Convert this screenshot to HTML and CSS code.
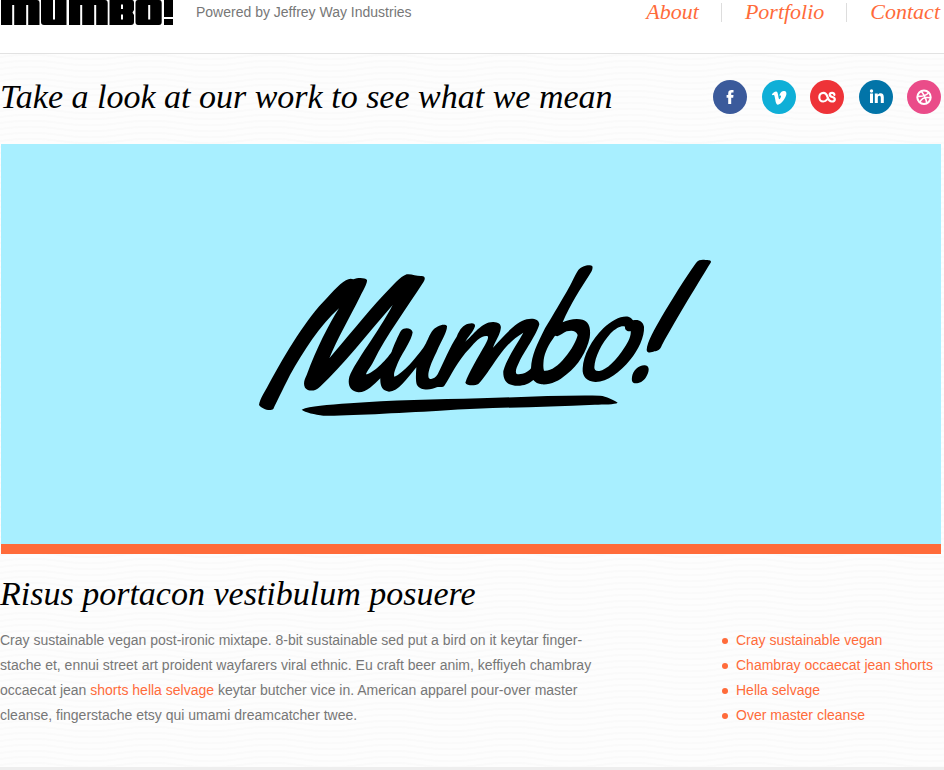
FILE: index.html
```html
<!DOCTYPE html>
<html lang="en">
<head>
<meta charset="utf-8">
<meta name="viewport" content="width=device-width, initial-scale=1">
<title>Mumbo!</title>
<link rel="stylesheet" href="styles.css">
</head>
<body>
<header class="masthead">
  <a class="brand" href="#" aria-label="Mumbo!">
    <svg class="wordmark" viewBox="0 0 174 26" aria-hidden="true">
      <path d="M1 0H37Q39.500 0 39.500 3V25H1ZM41 0H66.500V25H44Q41 25 41 22ZM69 0H105Q107.700 0 107.700 3V25H69ZM109.500 0H132Q134 0 134 3V10L132.500 12.500L134 15V22Q134 25 131 25H109.500ZM138 0H159Q161.700 0 161.700 3V22Q161.700 25 159 25H138Q135.500 25 135.500 22V3Q135.500 0 138 0ZM164 0H173V17H164ZM164 19H173V25H164Z"/>
      <path class="cut" d="M13.200 5V26M27.200 5V26M54 0V19.500M81.200 5V26M95.200 5V26M122 4.500V9M122 14.500V19.500M149.200 5V19.500"/>
    </svg>
  </a>
  <p class="tagline">Powered by Jeffrey Way Industries</p>
  <nav class="nav" aria-label="Main">
    <a href="#">About</a>
    <a href="#">Portfolio</a>
    <a href="#">Contact</a>
  </nav>
</header>
<main class="page">
  <div class="intro">
    <h1>Take a look at our work to see what we mean</h1>
    <div class="social">
      <a href="#" aria-label="Facebook"><svg viewBox="0 0 34 34"><circle cx="17" cy="17" r="17" fill="#3b5a9b"/><path fill="#fff" d="M15.2 24V17.8H13.6V15H15.2V13.4C15.2 11 16.5 10 18.5 10H20.5V12.6H19.2C18.4 12.6 18.2 13 18.2 13.7V15H20.5L20.2 17.8H18.2V24Z"/></svg></a>
      <a href="#" aria-label="Vimeo"><svg viewBox="0 0 34 34"><circle cx="17" cy="17" r="17" fill="#0fafd7"/><path fill="#fff" d="M9.8 14.2C11.3 12.9 12.7 11.5 14 11.5C15.4 11.6 15.8 13.2 16.1 15.1C16.5 17.5 16.8 19.2 17.3 19.2C17.8 19.2 18.9 17.3 19 16.4C19.1 15.3 18.2 15.2 17.3 15.6C18.3 12.3 20.2 10.9 22.2 11.1C24 11.2 24.6 12.5 24.4 14.3C24 17.5 19.1 24.7 15.9 24.7C13.5 24.7 13.5 19.5 12.5 16C12.2 14.7 11.8 14.7 10.5 15.3Z"/></svg></a>
      <a href="#" aria-label="Last.fm"><svg viewBox="0 0 34 34"><circle cx="17" cy="17" r="17" fill="#ee3338"/><path fill="none" stroke="#fff" stroke-width="2.2" stroke-linecap="round" d="M17 19.5C16 21 14.8 21.5 13.2 21.5C10.8 21.5 9.3 19.5 9.3 17.2C9.3 14.7 11 12.9 13.4 12.9C16.2 12.9 16.8 14.8 17.6 17.2C18.5 20.1 19.5 21.5 21.8 21.5C23.7 21.5 24.8 20.6 24.8 19.2C24.8 16.4 19.7 17.7 19.7 14.8C19.7 13.6 20.7 12.9 22.1 12.9C23.4 12.9 24.2 13.5 24.4 14.8"/></svg></a>
      <a href="#" aria-label="LinkedIn"><svg viewBox="0 0 34 34"><circle cx="17" cy="17" r="17" fill="#0274a8"/><path fill="#fff" d="M11 13.5H14V23H11ZM15.8 13.5H18.7V14.8C19.4 13.7 20.3 13.2 21.6 13.2C23.8 13.2 24.8 14.6 24.8 17V23H21.8V17.8C21.8 16.5 21.4 15.8 20.4 15.8C19.3 15.8 18.8 16.6 18.8 17.8V23H15.8Z"/><circle cx="12.5" cy="11" r="1.7" fill="#fff"/></svg></a>
      <a href="#" aria-label="Dribbble"><svg viewBox="0 0 34 34"><circle cx="17" cy="17" r="17" fill="#ea4c89"/><g fill="none" stroke="#fff" stroke-width="1.6"><circle cx="17" cy="17.3" r="6.7" stroke-width="2"/><path d="M14.2 11.3C17 14.5 19 18.5 19.8 23.2M10.5 16.3C14.5 16.6 19.5 15.5 21.6 12.6M12.8 22.2C14.4 18.5 18.5 16.8 23.5 17.8"/></g></svg></a>
    </div>
  </div>
  <div class="hero">
    <svg class="hero-logo" viewBox="51 42 1365 474" role="img" aria-label="Mumbo!">
      <g fill-rule="evenodd">
        <path d="M57 480C60 460 75 440 85 420C140 320 200 220 260 160C290 125 315 102 332 101L340 103C355 97 375 98 381 105C382 115 370 135 360 155C330 215 290 285 268 340C315 285 380 205 430 151C460 120 480 95 500 88C515 86 530 94 545 93C557 94 556 102 550 112C500 190 440 270 400 350C390 370 380 378 378 388C395 388 440 345 455 320C462 300 475 270 483 257C495 245 515 250 518 262C515 285 490 320 475 350C465 375 460 385 463 395C490 385 530 335 550 308C562 290 565 275 575 260C590 240 615 235 621 243C622 260 605 285 590 320C570 360 562 385 566 398C570 405 585 402 593 388C612 350 630 305 650 275C660 250 670 240 685 236C700 232 706 236 705 244C700 260 685 275 676 290C700 270 725 230 760 231C778 232 785 240 782 252C780 270 765 290 759 308C790 275 825 232 860 223C878 219 897 222 898 238C892 265 850 325 838 350C828 370 825 380 830 387C845 390 865 382 873 370C875 330 890 300 915 250C930 225 955 183 980 140C995 115 1005 90 1015 75C1025 63 1050 57 1057 64C1060 72 1053 82 1048 90C1025 125 990 180 968 232C985 223 1010 219 1028 224C1048 230 1053 250 1049 278C1040 320 1015 360 980 388C955 410 930 420 905 418C895 417 885 412 880 405C865 417 850 424 825 422C802 420 788 405 790 378C800 340 830 300 850 263C820 280 800 302 775 335C750 370 732 400 715 417C705 423 680 423 676 413C685 385 715 335 735 300C742 288 747 276 742 273C725 270 705 290 690 309C650 350 635 390 612 424C604 428 597 425 590 427C575 435 540 438 531 420C526 408 528 385 529 367C500 402 475 440 447 440C425 438 420 420 421 400C400 420 380 443 355 442C330 438 322 420 328 395C345 350 415 262 458 180C380 270 310 360 240 425C225 440 205 440 195 428C188 415 195 400 200 390C230 310 265 240 297 190C240 240 190 320 150 390C125 440 110 470 100 492C90 500 65 492 57 480ZM945 272C925 300 915 320 911 345C910 358 909 368 912 377C930 380 955 362 974 338C995 315 1010 285 1013 270C1008 256 995 255 980 259C970 263 961 272 952 274Z"/>
        <path d="M1028 370C1030 330 1055 285 1090 250C1115 225 1145 211 1165 215C1173 217 1175 222 1180 226C1195 222 1209 229 1212 245C1214 275 1195 315 1170 345C1140 382 1100 412 1066 411C1040 409 1026 395 1028 370ZM1063 367C1065 335 1085 295 1112 265C1128 248 1147 240 1155 245C1154 255 1163 261 1172 258C1174 270 1166 290 1152 310C1130 345 1100 375 1078 378C1067 379 1063 375 1063 367Z"/>
        <path d="M1220 315C1221 290 1245 250 1265 215C1295 165 1335 100 1368 54C1376 44 1386 44 1396 45C1408 45 1417 46 1411 55C1380 105 1310 220 1266 300C1260 316 1252 318 1243 319C1235 323 1221 326 1220 315Z"/>
        <path d="M1176 396C1178 377 1198 359 1215 361C1232 363 1227 383 1217 398C1209 411 1191 418 1181 414C1175 411 1175 404 1176 396Z"/>
        <path d="M185 494C210 483 260 480 330 475C450 466 590 463 720 460C850 456 970 450 1080 452C1100 454 1120 464 1133 473C1125 479 1090 478 1065 479C900 487 760 487 600 497C470 504 330 512 250 512C225 509 195 502 185 494Z"/>
      </g>
    </svg>
  </div>
  <div class="columns">
    <section class="story">
      <h2>Risus portacon vestibulum posuere</h2>
      <p>Cray sustainable vegan post-ironic mixtape. 8-bit sustainable sed put a bird on it keytar finger-<br>stache et, ennui street art proident wayfarers viral ethnic. Eu craft beer anim, keffiyeh chambray<br>occaecat jean <a href="#">shorts hella selvage</a> keytar butcher vice in. American apparel pour-over master<br>cleanse, fingerstache etsy qui umami dreamcatcher twee.</p>
    </section>
    <ul class="links">
      <li><a href="#">Cray sustainable vegan</a></li>
      <li><a href="#">Chambray occaecat jean shorts</a></li>
      <li><a href="#">Hella selvage</a></li>
      <li><a href="#">Over master cleanse</a></li>
    </ul>
  </div>
</main>
<footer class="footer"></footer>
</body>
</html>
```
FILE: styles.css
```css
* {
  box-sizing: border-box;
}

body {
  margin: 0;
  background-color: #fdfdfd;
  background-image: url("data:image/svg+xml,%3Csvg xmlns='http://www.w3.org/2000/svg' width='120' height='6'%3E%3Cpath d='M0 3C20 0 40 0 60 3S100 6 120 3' fill='none' stroke='%23fafafa' stroke-width='2'/%3E%3C/svg%3E");
  color: #777;
  font: 14px/25px "Helvetica Neue", "Liberation Sans", Arial, sans-serif;
}

a {
  color: #ff6b3a;
  text-decoration: none;
}

h1,
h2,
.nav {
  font-family: Georgia, "Liberation Serif", serif;
  font-style: italic;
  font-weight: normal;
}

h1,
h2,
p,
ul {
  margin: 0;
}

h1,
h2 {
  color: #000;
  font-size: 34px;
  line-height: 40px;
}

.masthead {
  display: flex;
  align-items: flex-start;
  height: 54px;
  padding-right: 4px;
  background: #fff;
  border-bottom: 1px solid #e2e2e2;
}

.wordmark {
  display: block;
  width: 174px;
  height: 26px;
}

.cut {
  fill: none;
  stroke: #fff;
  stroke-width: 2;
}

.tagline {
  margin-left: 22px;
}

.nav {
  display: flex;
  margin-left: auto;
  font-size: 22px;
  line-height: 24px;
}

.nav a + a {
  position: relative;
  margin-left: 46px;
}

.nav a + a::before {
  content: "";
  position: absolute;
  top: 3px;
  left: -24px;
  width: 1px;
  height: 19px;
  background: #ddd;
}

.page {
  padding-right: 3px;
}

.intro {
  display: flex;
  align-items: center;
  justify-content: space-between;
  height: 90px;
  padding-bottom: 4px;
}

.social {
  display: flex;
  justify-content: space-between;
  width: 228px;
}

.social svg {
  display: block;
  width: 34px;
  height: 34px;
}

.hero {
  display: flex;
  align-items: center;
  justify-content: center;
  height: 410px;
  margin-left: 1px;
  padding: 0 0 12px 26px;
  background: #a8efff;
  border-bottom: 10px solid #ff6b3a;
}

.hero-logo {
  width: 455px;
  height: 158px;
}

.columns {
  display: flex;
  align-items: flex-end;
  justify-content: space-between;
  padding: 20px 0 39px;
}

.story h2 {
  margin-bottom: 14px;
}

.links {
  flex: none;
  width: 219px;
  padding: 0;
  list-style: none;
}

.links li {
  display: flex;
  align-items: center;
  gap: 8px;
}

.links li::before {
  content: "";
  width: 6px;
  height: 6px;
  border-radius: 50%;
  background: #ff6b3a;
}

.footer {
  height: 3px;
  background: #eee;
}
```
